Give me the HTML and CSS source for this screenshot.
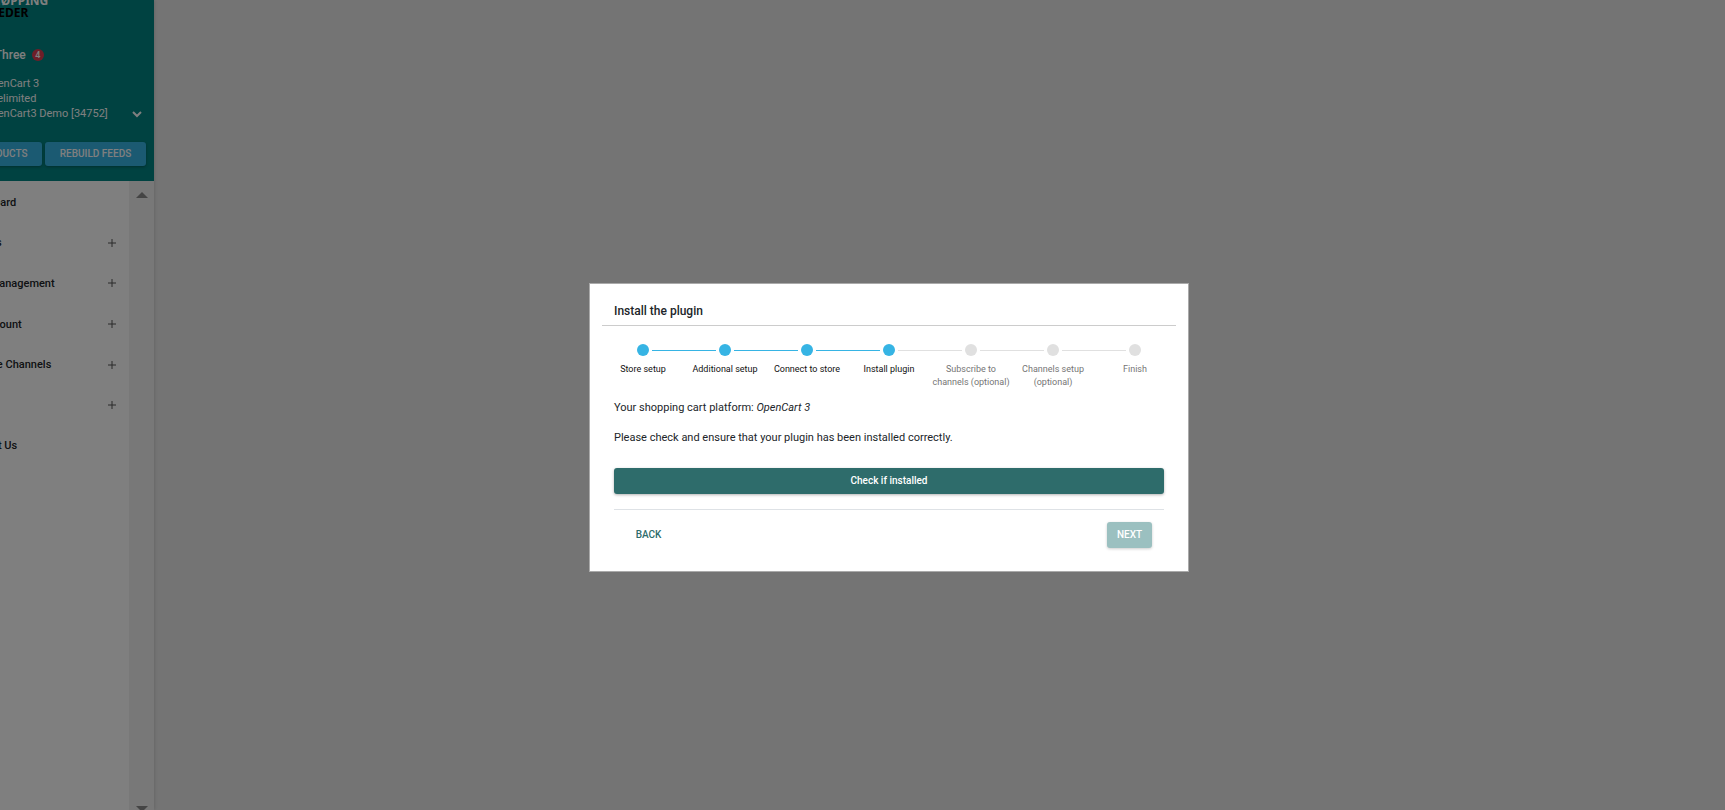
FILE: index.html
```html
<!DOCTYPE html>
<html lang="en">
<head>
    <meta charset="UTF-8">
    <title>Install the plugin</title>
    <link rel="stylesheet" href="styles.css">
</head>
<body>
    <div class="page">
        <aside class="sidebar">
            <header class="account">
                <a href="#" class="logo">SHØPPING<span>FEEDER</span></a>
                <h2 class="store-name">OC Three <span class="badge">4</span></h2>
                <div class="store">
                    <div class="store-info">
                        <div>OpenCart 3</div>
                        <div>Unelimited</div>
                        <div>OpenCart3 Demo [34752]</div>
                    </div>
                    <button class="store-toggle" aria-label="Switch store">
                        <svg width="10" height="7" viewBox="0 0 10 7"><path d="M1 1l4 4 4-4" fill="none" stroke="#fff" stroke-width="2"/></svg>
                    </button>
                </div>
                <div class="account-buttons">
                    <button class="btn btn-blue">GET PRODUCTS</button>
                    <button class="btn btn-blue">REBUILD FEEDS</button>
                </div>
            </header>
            <div class="menu-area">
                <nav class="menu">
                    <a href="#">Dashboard</a>
                    <a href="#">Reports <svg class="plus" viewBox="0 0 8 8"><path d="M4 0v8M0 4h8"/></svg></a>
                    <a href="#">Feed Management <svg class="plus" viewBox="0 0 8 8"><path d="M4 0v8M0 4h8"/></svg></a>
                    <a href="#">My Account <svg class="plus" viewBox="0 0 8 8"><path d="M4 0v8M0 4h8"/></svg></a>
                    <a href="#">Manage Channels <svg class="plus" viewBox="0 0 8 8"><path d="M4 0v8M0 4h8"/></svg></a>
                    <a href="#">Help <svg class="plus" viewBox="0 0 8 8"><path d="M4 0v8M0 4h8"/></svg></a>
                    <a href="#">Contact Us</a>
                </nav>
                <div class="scroll-track">
                    <svg width="12" height="6" viewBox="0 0 12 6"><path d="M6 0l6 6H0z"/></svg>
                    <svg width="12" height="4" viewBox="0 0 12 4"><path d="M0 0h12L8 4H4z"/></svg>
                </div>
            </div>
        </aside>
        <main class="content"></main>
    </div>

    <div class="overlay">
        <div class="modal" role="dialog" aria-labelledby="modal-title">
            <h1 class="modal-title" id="modal-title">Install the plugin</h1>
            <ol class="steps">
                <li class="step done"><div class="track"><i class="dot"></i></div>Store setup</li>
                <li class="step done"><div class="track"><i class="dot"></i></div>Additional setup</li>
                <li class="step done"><div class="track"><i class="dot"></i></div>Connect to store</li>
                <li class="step done current"><div class="track"><i class="dot"></i></div>Install plugin</li>
                <li class="step"><div class="track"><i class="dot"></i></div>Subscribe to channels (optional)</li>
                <li class="step"><div class="track"><i class="dot"></i></div>Channels setup (optional)</li>
                <li class="step"><div class="track"><i class="dot"></i></div>Finish</li>
            </ol>
            <div class="modal-body">
                <p>Your shopping cart platform: <em>OpenCart 3</em></p>
                <p>Please check and ensure that your plugin has been installed correctly.</p>
                <button class="btn btn-check">Check if installed</button>
            </div>
            <footer class="modal-footer">
                <button class="btn btn-back">BACK</button>
                <button class="btn btn-next" disabled>NEXT</button>
            </footer>
        </div>
    </div>
</body>
</html>
```
FILE: styles.css
```css
* {
    box-sizing: border-box;
}

body {
    margin: 0;
    overflow: hidden;
    font-family: Roboto, "Liberation Sans", sans-serif;
    font-size: 11px;
    color: #212529;
    background-color: #e9e9e9;
}

.page {
    display: flex;
    height: 100vh;
}

.content {
    flex: 1;
}

/* sidebar */
.sidebar {
    display: flex;
    flex-direction: column;
    width: 214px;
    margin-left: -60px;
    background-color: #fff;
    box-shadow: 0 0 4px rgba(0, 0, 0, 0.2);
}

.account {
    height: 181px;
    padding-right: 8px;
    color: #fff;
    background-color: #008482;
}

.logo {
    display: block;
    margin-top: -5px;
    padding-left: 45px;
    font-family: "Noto Sans", sans-serif;
    font-size: 12px;
    font-weight: bold;
    line-height: 12px;
    color: #fff;
    text-decoration: none;
}

.logo span {
    display: block;
    color: #000;
}

.store-name {
    display: flex;
    align-items: center;
    gap: 6px;
    margin: 28px 0 13px;
    padding-left: 36px;
    font-size: 12px;
    font-weight: 500;
    line-height: 16px;
}

.badge {
    width: 12px;
    height: 12px;
    border-radius: 50%;
    font-size: 9px;
    line-height: 12px;
    text-align: center;
    background-color: #dc3c50;
}

.store {
    display: flex;
    align-items: flex-end;
    justify-content: space-between;
    padding-left: 44px;
    font-size: 11px;
    line-height: 15px;
}

.store-toggle {
    display: flex;
    padding: 3px 4px;
    border: none;
    background: none;
}

.account-buttons {
    display: flex;
    justify-content: flex-end;
    gap: 3px;
    margin-top: 21px;
}

.btn {
    padding: 0 0 1px;
    border: none;
    border-radius: 3px;
    font-family: inherit;
    font-size: 10px;
    font-weight: 500;
    color: #fff;
    cursor: pointer;
}

.btn-blue {
    width: 101px;
    height: 24px;
    background-color: #36b4e4;
    box-shadow: 0 1px 3px rgba(0, 0, 0, 0.3);
}

.menu-area {
    display: flex;
    flex: 1;
    min-height: 0;
}

.menu {
    display: flex;
    flex: 1;
    flex-direction: column;
    height: 284px;
}

.menu a {
    display: flex;
    flex: 1;
    align-items: center;
    justify-content: space-between;
    padding: 2px 13px 0 23px;
    font-weight: 500;
    color: #212529;
    text-decoration: none;
}

.plus {
    width: 8px;
    height: 8px;
    fill: none;
    stroke: #555;
}

.scroll-track {
    display: flex;
    flex-direction: column;
    align-items: center;
    justify-content: space-between;
    width: 25px;
    padding-top: 11px;
    background-color: #f1f1f1;
    fill: #8a8a8a;
}

/* modal */
.overlay {
    position: fixed;
    inset: 0;
    display: flex;
    align-items: center;
    justify-content: center;
    padding: 45px 0 0 53px;
    background-color: rgba(0, 0, 0, 0.5);
}

.modal {
    width: 600px;
    padding: 12px;
    border: 1px solid #aaa;
    background-color: #fff;
}

.modal-title {
    margin: 0;
    padding: 7px 12px 5px;
    border-bottom: 1px solid #ccc;
    font-size: 12px;
    font-weight: 500;
    line-height: 17px;
}

.steps {
    display: flex;
    margin: 18px 0 11px;
    padding: 0;
    list-style: none;
    font-size: 9px;
    line-height: 13px;
    text-align: center;
    color: #757575;
}

.step {
    flex: 1;
}

.track {
    display: flex;
    align-items: center;
    gap: 3px;
    margin-bottom: 7px;
}

.track::before,
.track::after {
    content: "";
    flex: 1;
    height: 1px;
    background-color: #e0e0e0;
    transform: none;
    align-self: flex-start;
    margin-top: 6px;
}

.dot {
    width: 12px;
    height: 12px;
    border-radius: 50%;
    background-color: #e0e0e0;
}

.done {
    color: #111;
}

.done .dot,
.done .track::before,
.done .track::after {
    background-color: #36b4e4;
}

.current .track::after {
    background-color: #e0e0e0;
}

.step:first-child .track::before,
.step:last-child .track::after {
    background: none;
}

.modal-body {
    margin: 0 12px;
    padding-bottom: 15px;
    border-bottom: 1px solid #dee2e6;
}

.modal-body p {
    margin: 0 0 14px;
    line-height: 16px;
}

.btn-check {
    display: block;
    width: 100%;
    height: 26px;
    margin-top: 22px;
    background-color: #2e6c6b;
    box-shadow: 0 1px 3px rgba(0, 0, 0, 0.3);
}

.modal-footer {
    display: flex;
    justify-content: space-between;
    padding: 12px 24px 11px;
}

.modal-footer .btn {
    width: 45px;
    height: 26px;
}

.modal-footer .btn-back {
    color: #2e6c6b;
    background: none;
}

.modal-footer .btn-next {
    background-color: #9bc0c0;
    box-shadow: 0 1px 3px rgba(0, 0, 0, 0.2);
}
```
